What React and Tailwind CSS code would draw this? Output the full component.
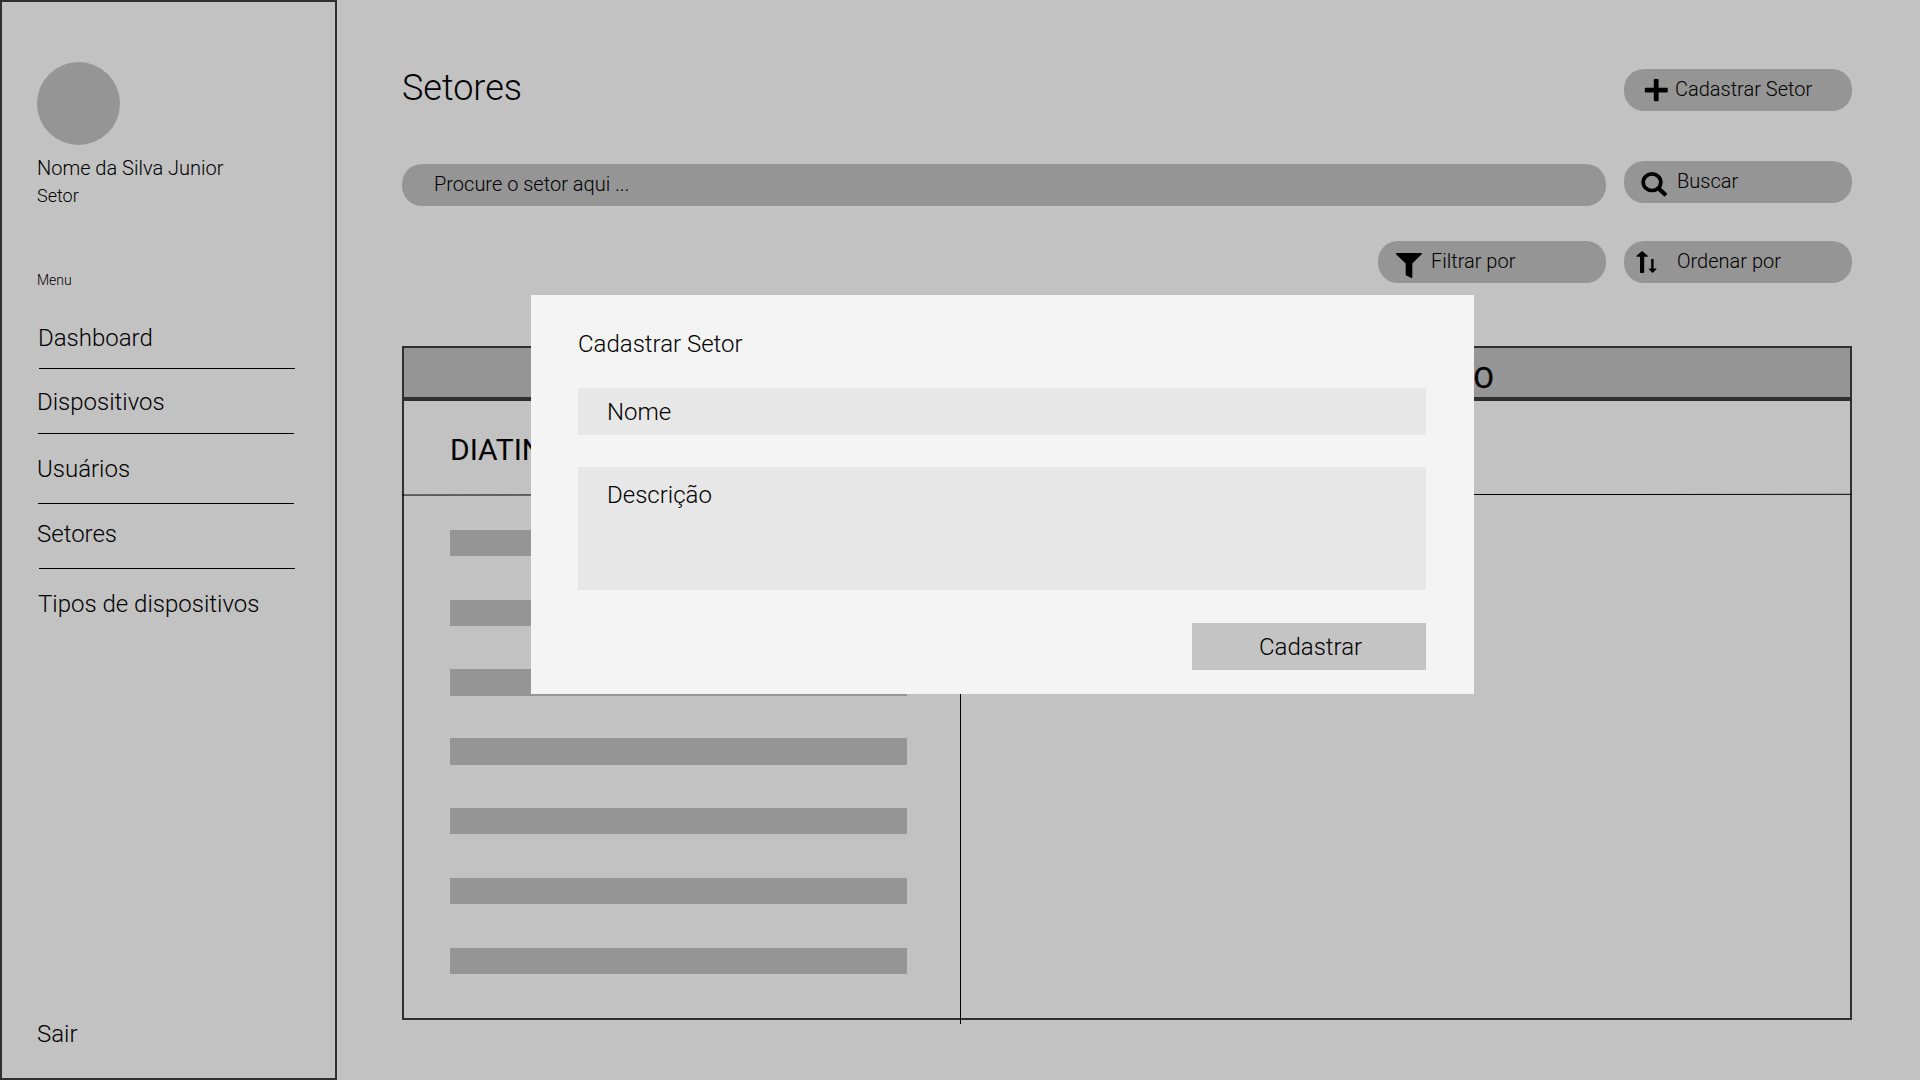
const MENU = [
  { label: 'Dashboard', item: 'mt-9 ml-px', rule: 'mt-4 ml-0.5' },
  { label: 'Dispositivos', item: 'mt-[19px]', rule: 'mt-[17px] ml-px' },
  { label: 'Usuários', item: 'mt-[21px]', rule: 'mt-5 ml-px' },
  { label: 'Setores', item: 'mt-4', rule: 'mt-5 ml-0.5' },
  { label: 'Tipos de dispositivos', item: 'mt-[21px] ml-px', rule: null },
];

const BARS = [
  'h-[26px] mt-[35px]',
  'h-[26px] mt-11',
  'h-[27px] mt-[43px]',
  'h-[27px] mt-[42px]',
  'h-[26px] mt-[43px]',
  'h-[26px] mt-11',
  'h-[26px] mt-11',
];

function PlusIcon() {
  return (
    <svg className="mt-[10px] ml-5 h-[23px] w-6 shrink-0" viewBox="0 0 24 23">
      <rect x="9.8" y="0" width="4.8" height="22.2" rx="1" />
      <rect x="0.8" y="8.8" width="23" height="4.6" rx="1" />
    </svg>
  );
}

function SearchIcon() {
  return (
    <svg className="mt-[11px] ml-[17px] h-[26px] w-[27px] shrink-0" viewBox="0 0 27 26" fill="none" stroke="#000">
      <ellipse cx="11" cy="10.2" rx="8.8" ry="8.3" strokeWidth="3.7" />
      <path d="M17.4 16.4l7.6 6.8" strokeWidth="4.2" />
    </svg>
  );
}

function FilterIcon() {
  return (
    <svg className="mt-3 ml-[18px] h-[26px] w-[26px] shrink-0" viewBox="0 0 26 26">
      <path d="M0.4 0h25.2q.5 0 .4.9L16.3 10.6V24.6q0 .6-.8.3L10.2 22.6q-.5-.3-.5-.8V10.6L0 1.3Q-.2 0 .4 0z" />
    </svg>
  );
}

function SortIcon() {
  return (
    <svg className="mt-[10px] ml-3 h-[22px] w-[21px] shrink-0" viewBox="0 0 21 22">
      <path d="M6.1 0l5.7 4.8q.3.8-.6.9H8.2V21q0 1-1 1H5q-1 0-1-1V5.7H1.2Q.1 5.6.5 4.8z" />
      <path d="M15.2 8h2.4v9.4h2.5q.7.2.3.9L16.5 22l-3.7-3.7q-.4-.7.3-.9h2.1z" />
    </svg>
  );
}

function Pill({ icon, label, gap, className = '' }) {
  return (
    <button className={`flex h-[42px] w-[228px] items-start rounded-[20px] bg-[#959595] text-left text-xl leading-6 font-light ${className}`}>
      {icon}
      <span className={`mt-2 whitespace-nowrap ${gap}`}>{label}</span>
    </button>
  );
}

function Sidebar() {
  return (
    <aside className="flex h-full w-[337px] shrink-0 flex-col border-2 border-[#2f2f2f] pt-[60px] pb-[30px] pl-[35px]">
      <div className="size-[83px] rounded-full bg-[#959595]" />
      <p className="mt-[11px] text-xl leading-6">Nome da Silva Junior</p>
      <p className="mt-[5px] text-lg leading-[22px]">Setor</p>
      <p className="mt-[65px] text-sm leading-4">Menu</p>
      <nav className="flex flex-col">
        {MENU.map(({ label, item, rule }) => (
          <div key={label} className="flex flex-col">
            <a className={`text-2xl leading-7 ${item}`}>{label}</a>
            {rule && <div className={`h-px w-64 bg-black ${rule}`} />}
          </div>
        ))}
      </nav>
      <a className="mt-auto text-2xl leading-7">Sair</a>
    </aside>
  );
}

function SectorTable() {
  return (
    <section className="mt-[63px] flex h-[674px] w-[1450px] flex-col border-2 border-[#2f2f2f]">
      <div className="flex h-[53px] shrink-0 border-b-4 border-[#2f2f2f] bg-[#959595] pt-3 text-[30px] leading-9 font-normal">
        <span className="w-[556px] text-center">SETOR</span>
        <span className="ml-auto pr-[356px] [-webkit-text-stroke:0.4px_black]">DESCRIÇÃO</span>
      </div>
      <div className="flex grow">
        <div className="w-[556px] shrink-0">
          <div className="h-[92px] pt-[31px] pl-[46px] text-[30px] leading-9 font-normal">DIATINF</div>
          <svg className="-ml-0.5 block h-[3px] w-[1450px] max-w-none" viewBox="0 0 1450 3" preserveAspectRatio="none">
            <path d="M0 2.05L1072 1.5H1230L1450 1.3" fill="none" stroke="#000" strokeWidth="1" />
          </svg>
          <div className="-mt-px flex flex-col pl-[46px]">
            {BARS.map((bar, i) => (
              <div key={i} className={`w-[457px] bg-[#959595] ${bar}`} />
            ))}
          </div>
        </div>
        <div className="-mb-[6px] w-px bg-black" />
      </div>
    </section>
  );
}

function RegisterDialog() {
  return (
    <div role="dialog" className="absolute top-[295px] left-[531px] flex h-[399px] w-[943px] flex-col bg-[#f4f4f4] pt-[35px] pr-12 pl-[47px] text-2xl leading-7">
      <h2>Cadastrar Setor</h2>
      <div className="mt-[30px] h-[47px] bg-[#e7e7e7] pt-[10px] pl-[29px]">Nome</div>
      <div className="mt-8 h-[123px] bg-[#e7e7e7] pt-[14px] pl-[29px]">Descrição</div>
      <button className="mt-[33px] flex h-[47px] w-[234px] items-center self-end bg-[#c4c4c4] pl-[67px] font-light">Cadastrar</button>
    </div>
  );
}

export default function App() {
  return (
    <div className="relative flex h-[1080px] w-[1920px] overflow-hidden bg-[#c2c2c2] font-['Roboto',sans-serif] font-light text-black">
      <Sidebar />
      <main className="flex flex-col pl-[65px]">
        <div className="flex h-[161px] w-[1450px] items-start justify-between">
          <h1 className="mt-[67px] text-4xl leading-[42px]">Setores</h1>
          <Pill icon={<PlusIcon />} label="Cadastrar Setor" gap="ml-[7px]" className="mt-[69px]" />
        </div>
        <div className="flex h-20 w-[1450px] items-start justify-between">
          <div className="mt-[3px] h-[42px] w-[1204px] rounded-[20px] bg-[#959595] pt-2 pl-8 text-xl leading-6">
            Procure o setor aqui ...
          </div>
          <Pill icon={<SearchIcon />} label="Buscar" gap="ml-[9px]" />
        </div>
        <div className="flex w-[1450px] justify-end gap-[18px]">
          <Pill icon={<FilterIcon />} label="Filtrar por" gap="ml-[9px]" />
          <Pill icon={<SortIcon />} label="Ordenar por" gap="ml-5" />
        </div>
        <SectorTable />
      </main>
      <RegisterDialog />
    </div>
  );
}
